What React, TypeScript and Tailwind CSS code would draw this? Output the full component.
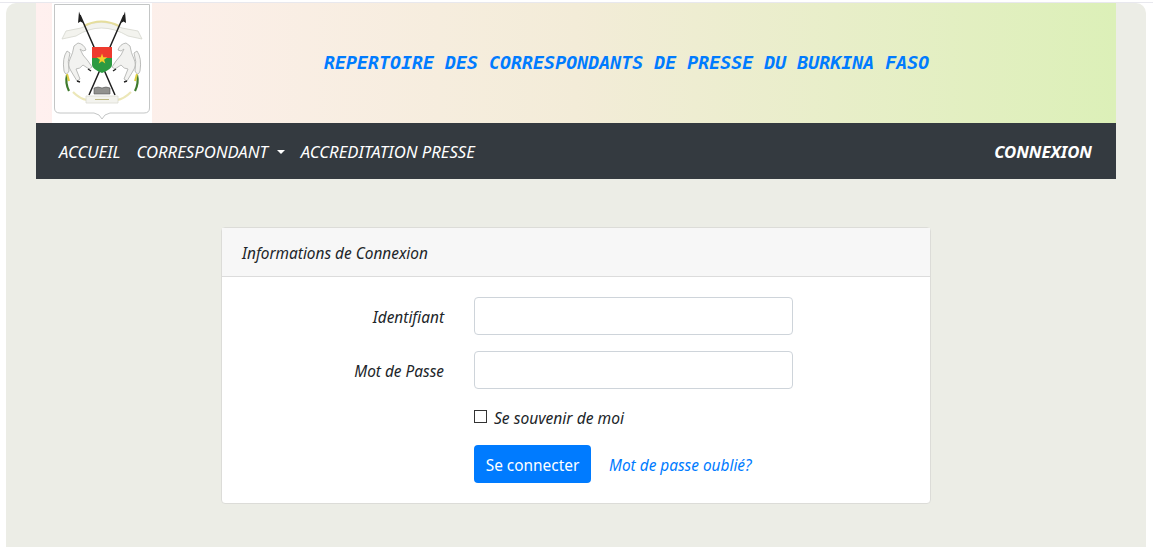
const ui = "font-['Noto_Sans','Open_Sans',sans-serif]";

// Armoiries du Burkina Faso, redrawn by hand
function Emblem() {
  const horse = (
    <g fill="#f2f2f0" stroke="#b4b6b3" strokeWidth="0.9">
      <path d="M15 48Q10 55 12 68Q14 74 17 68Q15 58 18 50Z" />
      <path d="M26 40Q32 41 34 47L31 48L28 46Q30 52 36 58L40 64L37 66L31 62Q28 66 24 66L28 76L25 78L19 68Q15 62 18 56Q21 50 22 43Z" />
      <path d="M36 66L39 68M25 78L28 79" stroke="#222" strokeWidth="1.4" />
      <path d="M15 72Q13 80 17 88" fill="none" stroke="#3f7a2c" strokeWidth="2.2" />
      <path d="M15 71L17 78" stroke="#e0cf46" strokeWidth="2" />
    </g>
  );
  return (
    <svg viewBox="0 0 100 120" className="h-[120px] w-[100px] shrink-0 bg-white" aria-hidden="true">
      <path d="M2.5 1.5H97.5V105Q97.5 110 92 110H58Q52 111 50 116Q48 111 42 110H8Q2.5 110 2.5 105Z" fill="#fff" stroke="#c4c6c6" strokeWidth="1" />
      {/* top ribbon */}
      <path d="M10 36L14 28L29 25Q49 13 70 25L86 28L90 36L76 33Q49 17 24 33Z" fill="#f3f3ee" stroke="#d9dad2" strokeWidth="0.9" />
      <path d="M32 23Q49 14 67 23" fill="none" stroke="#e6de9c" strokeWidth="2.2" />
      {/* spears */}
      <path d="M28 12L63 92M72 12L37 92" stroke="#1f1f1f" strokeWidth="1.5" />
      <path d="M27 8.5L31 20L28.5 18.5L26 20ZM73 8.5L74 20L71.500 18.500L69 20Z" fill="#1f1f1f" />
      {/* horses */}
      {horse}
      <g transform="translate(100 0) scale(-1 1)">{horse}</g>
      {/* bottom garland */}
      <path d="M21 89Q28 96 35 97M79 89Q72 96 65 97" fill="none" stroke="#ece7b8" strokeWidth="2.2" />
      {/* shield */}
      <path d="M40 44H60V55H40Z" fill="#ee3a2e" />
      <path d="M40 55H60V62Q60 66 50 70Q40 66 40 62Z" fill="#2c9a41" />
      <path d="M50 50.500L51.300 54.300H55.300L52.100 56.700L53.300 60.500L50 58.200L46.700 60.500L47.900 56.700L44.700 54.300H48.700Z" fill="#f4cf2a" />
      {/* book */}
      <path d="M42 85Q46 83 50 85Q54 83 58 85V91H42Z" fill="#92928f" stroke="#555" strokeWidth="0.6" />
      {/* motto */}
      <path d="M34 93H66V100H34Z" fill="#f3f3ee" stroke="#dadad0" strokeWidth="0.8" />
      <path d="M43 96.500H57" stroke="#bdb882" strokeWidth="1" />
    </svg>
  );
}

export default function App() {
  return (
    <div className={`${ui} min-h-[547px] bg-white text-[15.4px] text-[#212529]`}>
      <div className="h-[3px] border-b border-[#e8e8ee]" />
      <div className="ml-[6px] h-[544px] w-[1140px] rounded-t-[10px] bg-[#ecede6] px-[30px]">
        <header className="flex h-[120px] items-start bg-gradient-to-r from-[#fff0ef] via-[#f3ecd8] to-[#dcf0b8] pl-[16px]">
          <Emblem />
          <h1 className="ml-[172px] mt-[49px] font-['DejaVu_Sans_Mono',monospace] text-[18.3px] font-bold italic leading-[22px] text-[#007bff]">
            REPERTOIRE DES CORRESPONDANTS DE PRESSE DU BURKINA FASO
          </h1>
        </header>

        <nav className="flex h-[56px] items-center justify-between bg-[#343a40] pl-[23px] pr-[24px] pt-[2px] text-[16.7px] italic text-white">
          <ul className="flex items-center gap-[16px]">
            <li>ACCUEIL</li>
            <li className="flex items-center">
              CORRESPONDANT
              <span className="ml-[9px] border-x-[4.8px] border-t-[4.8px] border-x-transparent border-t-white" />
            </li>
            <li>ACCREDITATION PRESSE</li>
          </ul>
          <span className="font-bold">CONNEXION</span>
        </nav>

        <main className="ml-[185px] mt-[48px] h-[277px] w-[710px] rounded-[4px] border border-[#dcdcd8] bg-white italic">
          <div className="flex h-[49px] items-center border-b border-[#dcdcdc] bg-[#f7f7f7] px-[20px] pt-[4px]">
            Informations de Connexion
          </div>
          <form className="pt-[20px]">
            <div className="flex items-center">
              <label className="w-[222px] pt-[4px] text-right">Identifiant</label>
              <input type="text" className="ml-[30px] h-[38px] w-[319px] rounded-[4px] border border-[#ced4da] bg-white" />
            </div>
            <div className="mt-[16px] flex items-center">
              <label className="w-[222px] pt-[4px] text-right">Mot de Passe</label>
              <input type="password" className="ml-[30px] h-[38px] w-[319px] rounded-[4px] border border-[#ced4da] bg-white" />
            </div>
            <div className="ml-[252px] mt-[15px] flex h-[29px] items-start">
              <span className="mt-[6px] h-[13px] w-[13px] border border-[#333] bg-white" />
              <span className="ml-[7px] text-[15.6px] leading-[29px]">Se souvenir de moi</span>
            </div>
            <div className="ml-[252px] mt-[12px] flex items-center">
              <button type="button" className="h-[38px] w-[117px] rounded-[4px] bg-[#007bff] pt-[4px] not-italic text-white">
                Se connecter
              </button>
              <a className="ml-[18px] pt-[4px] text-[#007bff]">Mot de passe oublié?</a>
            </div>
          </form>
        </main>
      </div>
    </div>
  );
}
